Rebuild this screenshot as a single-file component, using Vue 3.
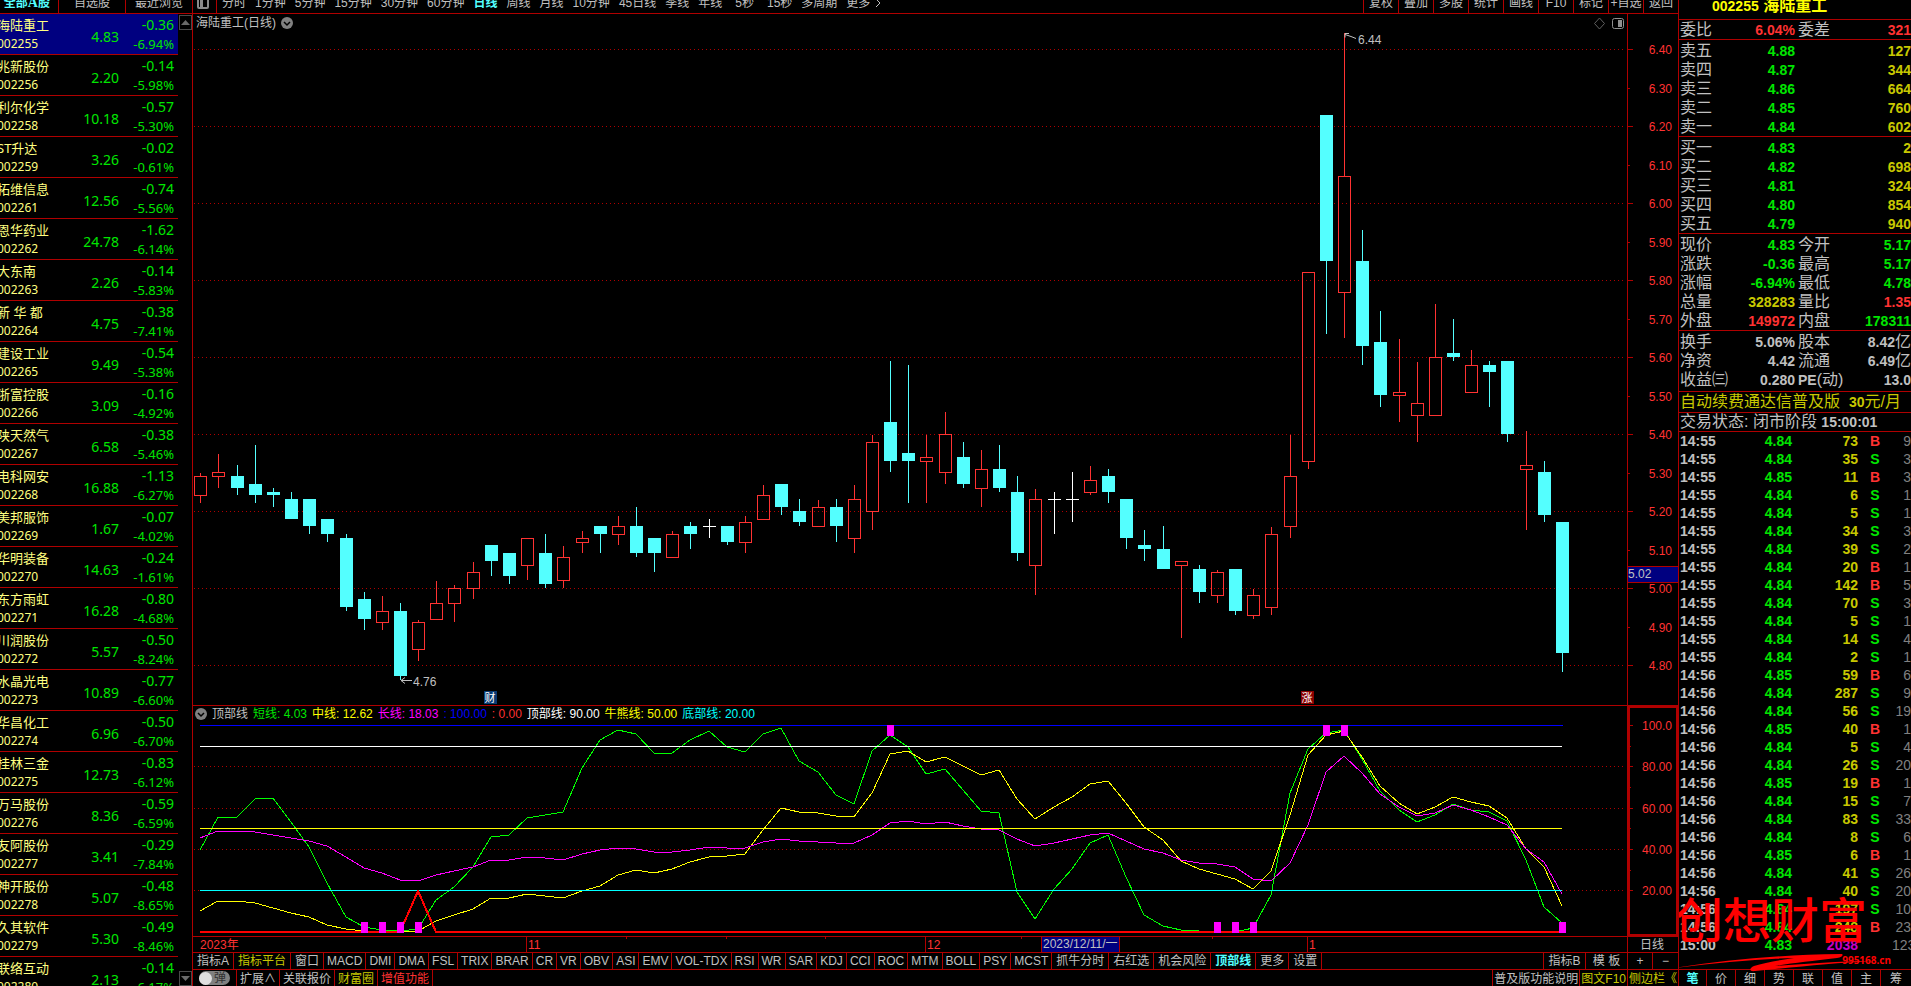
<script setup>
const stocks = [
  ['海陆重工', '002255', '4.83', '-0.36', '-6.94%'],
  ['兆新股份', '002256', '2.20', '-0.14', '-5.98%'],
  ['利尔化学', '002258', '10.18', '-0.57', '-5.30%'],
  ['ST升达', '002259', '3.26', '-0.02', '-0.61%'],
  ['拓维信息', '002261', '12.56', '-0.74', '-5.56%'],
  ['恩华药业', '002262', '24.78', '-1.62', '-6.14%'],
  ['大东南', '002263', '2.26', '-0.14', '-5.83%'],
  ['新 华 都', '002264', '4.75', '-0.38', '-7.41%'],
  ['建设工业', '002265', '9.49', '-0.54', '-5.38%'],
  ['浙富控股', '002266', '3.09', '-0.16', '-4.92%'],
  ['陕天然气', '002267', '6.58', '-0.38', '-5.46%'],
  ['电科网安', '002268', '16.88', '-1.13', '-6.27%'],
  ['美邦服饰', '002269', '1.67', '-0.07', '-4.02%'],
  ['华明装备', '002270', '14.63', '-0.24', '-1.61%'],
  ['东方雨虹', '002271', '16.28', '-0.80', '-4.68%'],
  ['川润股份', '002272', '5.57', '-0.50', '-8.24%'],
  ['水晶光电', '002273', '10.89', '-0.77', '-6.60%'],
  ['华昌化工', '002274', '6.96', '-0.50', '-6.70%'],
  ['桂林三金', '002275', '12.73', '-0.83', '-6.12%'],
  ['万马股份', '002276', '8.36', '-0.59', '-6.59%'],
  ['友阿股份', '002277', '3.41', '-0.29', '-7.84%'],
  ['神开股份', '002278', '5.07', '-0.48', '-8.65%'],
  ['久其软件', '002279', '5.30', '-0.49', '-8.46%'],
  ['联络互动', '002280', '2.13', '-0.14', '-6.17%'],
]

const periods = ['分时', '1分钟', '5分钟', '15分钟', '30分钟', '60分钟', '日线', '周线', '月线', '10分钟', '45日线', '季线', '年线', '5秒', '15秒', '多周期', '更多']
const tools = ['复权', '叠加', '多股', '统计', '画线', 'F10', '标记', '+自选', '返回']
const indicators = ['指标A', '指标平台', '窗口', 'MACD', 'DMI', 'DMA', 'FSL', 'TRIX', 'BRAR', 'CR', 'VR', 'OBV', 'ASI', 'EMV', 'VOL-TDX', 'RSI', 'WR', 'SAR', 'KDJ', 'CCI', 'ROC', 'MTM', 'BOLL', 'PSY', 'MCST', '抓牛分时', '右红选', '机会风险', '顶部线', '更多', '设置']
const isChinese = (t) => /[\u4e00-\u9fff]/.test(t)

const legend = [
  ['顶部线', 'grey'], ['短线: 4.03', 'green'], ['中线: 12.62', 'yellow'], ['长线: 18.03', 'magenta'],
  [': 100.00', 'blue'], [': 0.00', 'red'], ['顶部线: 90.00', 'white'], ['牛熊线: 50.00', 'yellow'], ['底部线: 20.00', 'cyan'],
]

/* kind, high, body top, body bottom, low (chart units) */
const candleData = [
  ['r', 473, 476, 496, 503], ['r', 454, 472, 477, 488], ['c', 465, 476, 488, 495], ['c', 445, 484, 495, 503],
  ['c', 488, 492, 495, 507], ['c', 492, 499, 519, 519], ['c', 499, 499, 526, 534], ['c', 519, 519, 534, 542],
  ['c', 534, 538, 607, 611], ['c', 592, 599, 619, 630], ['r', 596, 611, 623, 630], ['c', 603, 611, 676, 680],
  ['r', 620, 622, 650, 661], ['r', 581, 603, 620, 620], ['r', 585, 588, 604, 622], ['r', 562, 572, 589, 599],
  ['c', 545, 545, 561, 576], ['c', 553, 553, 576, 584], ['r', 538, 538, 566, 580], ['c', 534, 553, 584, 588],
  ['r', 546, 557, 581, 588], ['r', 531, 538, 543, 553], ['c', 526, 526, 534, 553], ['r', 516, 526, 535, 545],
  ['c', 507, 526, 553, 557], ['c', 538, 538, 553, 572], ['r', 531, 534, 558, 558], ['c', 522, 526, 534, 549],
  ['w', 519, 526, 527, 538], ['c', 526, 526, 542, 545], ['r', 516, 522, 543, 553], ['r', 485, 495, 520, 520],
  ['c', 484, 484, 507, 515], ['c', 499, 511, 522, 526], ['r', 500, 507, 527, 527], ['c', 499, 507, 526, 542],
  ['r', 485, 499, 539, 553], ['r', 435, 442, 512, 530], ['c', 361, 422, 461, 472], ['c', 365, 453, 461, 503],
  ['r', 435, 457, 462, 503], ['r', 412, 434, 473, 484], ['c', 442, 457, 484, 488], ['r', 450, 469, 489, 507],
  ['c', 445, 469, 488, 492], ['c', 476, 492, 553, 561], ['r', 489, 499, 566, 595], ['w', 492, 499, 500, 534],
  ['w', 472, 499, 500, 522], ['r', 466, 480, 493, 495], ['c', 469, 476, 492, 503], ['c', 499, 499, 538, 549],
  ['c', 530, 545, 549, 561], ['c', 526, 549, 569, 569], ['r', 561, 561, 566, 638], ['c', 565, 569, 592, 603],
  ['r', 570, 572, 596, 603], ['c', 569, 569, 611, 615], ['r', 589, 595, 616, 619], ['r', 527, 534, 608, 615],
  ['r', 435, 476, 527, 538], ['r', 272, 272, 462, 469], ['c', 115, 115, 261, 334], ['r', 33, 176, 293, 338],
  ['c', 230, 261, 346, 365], ['c', 311, 342, 395, 407], ['r', 339, 392, 396, 422], ['r', 362, 403, 416, 442],
  ['r', 304, 357, 416, 416], ['c', 319, 353, 357, 361], ['r', 350, 365, 393, 393], ['c', 361, 365, 372, 407],
  ['c', 361, 361, 434, 442], ['r', 431, 465, 470, 530], ['c', 461, 472, 515, 522], ['c', 522, 522, 653, 672],
]
const xAt = (i) => Math.round(200.253 + i * 18.156)
const candles = candleData.map(([kind, high, top, bottom, low], i) => ({ kind, high, top, bottom, low, x: xAt(i) }))

const priceTicks = Array.from({ length: 17 }, (_, i) => ({
  label: (6.4 - i * 0.1).toFixed(2),
  y: 49 + Math.round(i * 38.5),
  major: i % 2 === 0,
}))
const levelTicks = Array.from({ length: 9 }, (_, i) => ({
  label: i === 0 ? '100.0' : (100 - i * 10).toFixed(2),
  y: 725 + Math.round(i * 20.65),
  major: i % 2 === 0,
}))

const shortLine = [850, 817, 817, 799, 798, 822, 847, 883, 917, 927, 930, 931, 929, 900, 887, 867, 837, 835, 818, 815, 812, 768, 740, 730, 734, 753, 753, 740, 731, 747, 752, 734, 728, 761, 772, 795, 804, 751, 735, 747, 774, 769, 790, 811, 813, 892, 919, 889, 869, 843, 835, 877, 915, 926, 930, 931, 932, 932, 928, 895, 793, 749, 733, 730, 759, 791, 810, 822, 815, 804, 810, 812, 821, 860, 907, 923]
const midLine = [911, 901, 901, 903, 908, 913, 917, 925, 929, 931, 932, 932, 931, 921, 915, 909, 898, 898, 894, 896, 898, 891, 886, 875, 870, 873, 869, 862, 857, 856, 854, 830, 808, 812, 813, 816, 817, 793, 754, 751, 762, 757, 766, 775, 770, 799, 819, 807, 797, 784, 781, 803, 827, 840, 861, 869, 874, 879, 889, 871, 815, 755, 735, 731, 757, 786, 803, 814, 807, 797, 802, 806, 818, 849, 867, 906]
const longLine = [838, 831, 831, 832, 835, 838, 841, 846, 857, 868, 873, 880, 881, 875, 871, 867, 860, 860, 857, 858, 860, 854, 850, 848, 849, 852, 852, 850, 847, 848, 848, 842, 839, 841, 842, 843, 843, 835, 823, 821, 824, 822, 826, 829, 830, 839, 846, 843, 839, 835, 833, 841, 849, 853, 860, 863, 864, 867, 879, 881, 863, 825, 772, 756, 773, 794, 807, 816, 813, 805, 810, 817, 825, 849, 862, 894]
const points = (series) => series.map((y, i) => `${xAt(i)},${y}`).join(' ')
const marks = [...[38, 62, 63].map((i) => [xAt(i), 725]), ...[9, 10, 11, 12, 56, 57, 58, 75].map((i) => [xAt(i), 922])]

const months = [[526, '11'], [925, '12'], [1307, '1']]
const weekTicks = [626, 726, 825, 1021, 1212]

const asks = [['卖五', '4.88', '127'], ['卖四', '4.87', '344'], ['卖三', '4.86', '664'], ['卖二', '4.85', '760'], ['卖一', '4.84', '602']]
const bids = [['买一', '4.83', '2'], ['买二', '4.82', '698'], ['买三', '4.81', '324'], ['买四', '4.80', '854'], ['买五', '4.79', '940']]
const book = (rows) => rows.map(([a, p, v]) => [a, p, 'green', '', v, 'olive'])
const sections = [
  [['委比', '6.04%', 'red', '委差', '321', 'red']],
  book(asks),
  book(bids),
  [
    ['现价', '4.83', 'green', '今开', '5.17', 'green'],
    ['涨跌', '-0.36', 'green', '最高', '5.17', 'green'],
    ['涨幅', '-6.94%', 'green', '最低', '4.78', 'green'],
    ['总量', '328283', 'olive', '量比', '1.35', 'red'],
    ['外盘', '149972', 'red', '内盘', '178311', 'green'],
  ],
  [
    ['换手', '5.06%', 'grey', '股本', '8.42', 'grey', '亿'],
    ['净资', '4.42', 'grey', '流通', '6.49', 'grey', '亿'],
    ['收益㈢', '0.280', 'grey', 'PE(动)', '13.0', 'grey'],
  ],
]

const trades = [
  ['14:55', '4.84', 73, 'B', 9], ['14:55', '4.84', 35, 'S', 3], ['14:55', '4.85', 11, 'B', 3], ['14:55', '4.84', 6, 'S', 1],
  ['14:55', '4.84', 5, 'S', 1], ['14:55', '4.84', 34, 'S', 3], ['14:55', '4.84', 39, 'S', 2], ['14:55', '4.84', 20, 'B', 1],
  ['14:55', '4.84', 142, 'B', 5], ['14:55', '4.84', 70, 'S', 3], ['14:55', '4.84', 5, 'S', 1], ['14:55', '4.84', 14, 'S', 4],
  ['14:55', '4.84', 2, 'S', 1], ['14:56', '4.85', 59, 'B', 6], ['14:56', '4.84', 287, 'S', 9], ['14:56', '4.84', 56, 'S', 19],
  ['14:56', '4.85', 40, 'B', 1], ['14:56', '4.84', 5, 'S', 4], ['14:56', '4.84', 26, 'S', 20], ['14:56', '4.85', 19, 'B', 1],
  ['14:56', '4.84', 15, 'S', 7], ['14:56', '4.84', 83, 'S', 33], ['14:56', '4.84', 8, 'S', 6], ['14:56', '4.85', 6, 'B', 1],
  ['14:56', '4.84', 41, 'S', 26], ['14:56', '4.84', 40, 'S', 20], ['14:56', '4.84', 197, 'S', 10], ['14:56', '4.84', 248, 'B', 23],
  ['15:00', '4.83', 2038, '', 123],
]
const sideTabs = ['笔', '价', '细', '势', '联', '值', '主', '筹']
</script>

<template>
  <div class="app">
    <aside class="watch">
      <nav class="topbar watch-tabs">
        <button class="on">全部<b class="serif">A</b>股</button>
        <button>自选股</button>
        <button>最近浏览</button>
      </nav>
      <div class="watch-body">
        <table class="stocks">
          <tbody>
            <tr v-for="(s, i) in stocks" :key="s[1]" :class="{ current: i === 0 }">
              <td class="who"><span class="name">{{ s[0] }}</span><span class="code">{{ s[1] }}</span></td>
              <td class="price">{{ s[2] }}</td>
              <td class="delta"><span class="chg">{{ s[3] }}</span><span class="pct">{{ s[4] }}</span></td>
            </tr>
          </tbody>
        </table>
        <div class="scroll">
          <button aria-label="向上滚动"><svg width="9" height="5" viewBox="0 0 9 5"><path d="M4.500 0 9 5H0z" fill="#6a6a6a" /></svg></button>
          <button aria-label="向下滚动"><svg width="9" height="5" viewBox="0 0 9 5"><path d="M0 0h9L4.500 5z" fill="#6a6a6a" /></svg></button>
        </div>
      </div>
    </aside>

    <main class="center">
      <nav class="topbar">
        <button class="layout-btn" aria-label="布局">
          <svg width="12" height="12" viewBox="0 0 12 12"><rect x="1" y="1" width="10" height="10" rx="1" fill="none" stroke="#8a8a8a" stroke-width="2" /><rect x="3" y="1" width="3" height="9" fill="#8a8a8a" /></svg>
        </button>
        <div class="periods">
          <button v-for="p in periods" :key="p" :class="{ on: p === '日线', sec: p.endsWith('秒') }">{{ p }}</button>
          <svg class="chev" width="7" height="10" viewBox="0 0 7 10"><path d="M1 1l4 4-4 4" fill="none" stroke="#c0c0c0" /></svg>
        </div>
        <div class="tools">
          <button v-for="t in tools" :key="t">{{ t }}</button>
        </div>
      </nav>

      <section class="pane">
        <div class="caption">
          <span>海陆重工(日线)</span>
          <svg width="12" height="12" viewBox="0 0 12 12"><circle cx="6" cy="6" r="6" fill="#808080" /><path d="M3 5l3 3 3-3" fill="none" stroke="#000" stroke-width="1.500" /></svg>
        </div>
        <svg class="plot" viewBox="193 14 1485 691">
          <g class="grid">
            <template v-for="t in priceTicks" :key="t.label">
              <line v-if="t.major" x1="194" x2="1624" :y1="t.y + 0.5" :y2="t.y + 0.5" />
            </template>
          </g>
          <g class="frame">
            <line x1="1627.500" x2="1627.500" y1="14" y2="705" />
            <line v-for="t in priceTicks" :key="t.label" x1="1628" :x2="t.major ? 1633 : 1630" :y1="t.y + 0.5" :y2="t.y + 0.5" />
          </g>
          <g class="axis-text">
            <text v-for="t in priceTicks" :key="t.label" x="1672" :y="t.y + 5">{{ t.label }}</text>
          </g>
          <g shape-rendering="crispEdges">
            <g v-for="(c, i) in candles" :key="i" :class="['candle', c.kind]">
              <rect class="wick" :x="c.x" :y="c.high" width="1" :height="c.top - c.high" />
              <rect class="wick" :x="c.x" :y="c.bottom" width="1" :height="c.low - c.bottom" />
              <rect v-if="c.kind === 'r'" class="hollow" :x="c.x - 5.5" :y="c.top + 0.5" width="12" :height="c.bottom - c.top - 1" />
              <rect v-else class="wick" :x="c.x - 6" :y="c.top" width="13" :height="c.bottom - c.top" />
            </g>
          </g>
          <g fill="none" stroke="#c0c0c0">
            <path d="M401 680.500h11M405 677.500l-4 3 4 3" />
            <path d="M1345 34.500l6 2 5 2M1349 33.500h-4v4" />
          </g>
          <text class="note" x="413" y="686">4.76</text>
          <text class="note" x="1358" y="44">6.44</text>
          <rect x="484" y="691" width="13" height="13" fill="#0a3a72" />
          <text class="flag" x="490" y="702">财</text>
          <rect x="1301" y="691" width="13" height="13" fill="#8a0000" />
          <text class="flag" x="1307" y="702">涨</text>
          <rect x="1628" y="566" width="50" height="17" fill="#b00000" />
          <rect x="1628" y="567" width="50" height="15" fill="#000080" />
          <text class="note" x="1628" y="578">5.02</text>
          <path d="M1599.500 18l5 5.500-5 5.500-5-5.500z" fill="none" stroke="#606060" />
          <rect x="1612.500" y="18.500" width="11" height="10" rx="2" fill="none" stroke="#909090" />
          <rect x="1618" y="20" width="4" height="7" fill="#909090" />
        </svg>
      </section>

      <section class="pane">
        <div class="caption legend">
          <svg width="12" height="12" viewBox="0 0 12 12"><circle cx="6" cy="6" r="6" fill="#808080" /><path d="M3 5l3 3 3-3" fill="none" stroke="#000" stroke-width="1.500" /></svg>
          <span v-for="l in legend" :key="l[0]" :class="'t-' + l[1]">{{ l[0] }}</span>
        </div>
        <svg class="plot" viewBox="193 706 1485 230">
          <g class="grid">
            <line v-for="y in [766, 808, 849, 890]" :key="y" x1="194" x2="1624" :y1="y + 0.5" :y2="y + 0.5" />
          </g>
          <g class="frame">
            <line x1="1627.500" x2="1627.500" y1="706" y2="936" />
            <line v-for="t in levelTicks" :key="t.label" x1="1629" :x2="t.major ? 1633 : 1631" :y1="t.y + 0.5" :y2="t.y + 0.5" />
            <rect x="1629" y="707" width="48" height="228" fill="none" stroke-width="2" />
          </g>
          <g class="axis-text">
            <template v-for="t in levelTicks" :key="t.label">
              <text v-if="t.major" x="1672" :y="t.y + 5">{{ t.label }}</text>
            </template>
          </g>
          <g class="lines">
            <polyline :points="points(shortLine)" stroke="#00ff00" />
            <polyline :points="points(midLine)" stroke="#ffff00" />
            <polyline :points="points(longLine)" stroke="#ff00ff" />
            <path d="M200 725.500H1563" stroke="#0000ff" />
            <path d="M200 746.500H1562" stroke="#ffffff" />
            <path d="M200 828.500H1562" stroke="#ffff00" />
            <path d="M200 890.500H1562" stroke="#00ffff" />
            <path d="M200 932H400L418 891L436 932H1562" stroke="#ff0000" stroke-width="2" />
          </g>
          <rect v-for="(m, i) in marks" :key="i" :x="m[0] - 3" :y="m[1]" width="7" height="11" fill="#ff00ff" />
        </svg>
      </section>

      <section class="pane">
        <svg class="plot" viewBox="193 937 1485 15">
          <g class="frame">
            <line v-for="m in months" :key="m[0]" :x1="m[0] + 0.5" :x2="m[0] + 0.5" y1="937" y2="952" />
            <line v-for="x in weekTicks" :key="x" :x1="x + 0.5" :x2="x + 0.5" y1="937" y2="939" />
            <line x1="1627.500" x2="1627.500" y1="937" y2="952" />
          </g>
          <text class="date" x="200" y="949">2023年</text>
          <text v-for="m in months" :key="m[0]" class="date" :x="m[0] + 2" y="949">{{ m[1] }}</text>
          <rect x="1041" y="937" width="79" height="15" fill="#b00000" />
          <rect x="1042" y="937" width="77" height="15" fill="#000080" />
          <text class="note" x="1043" y="948">2023/12/11/一</text>
          <text class="note" x="1640" y="949">日线</text>
        </svg>
      </section>

      <nav class="strip indicators">
        <button v-for="t in indicators" :key="t" :class="{ han: isChinese(t), gold: t === '指标平台', on: t === '顶部线' }">{{ t }}</button>
        <div class="push">
          <button class="wide">指标B</button>
          <button class="wide">模 板</button>
          <button class="zoom">+</button>
          <button class="zoom">−</button>
        </div>
      </nav>

      <nav class="strip bottom">
        <label class="switch"><input type="checkbox" aria-label="弹"><span class="knob"></span>弹</label>
        <button>扩展∧</button>
        <button>关联报价</button>
        <button class="gold">财富圈</button>
        <button class="hot">增值功能</button>
        <div class="push">
          <button>普及版功能说明</button>
          <button class="gold">图文F10</button>
          <button class="gold">侧边栏《</button>
        </div>
      </nav>
    </main>

    <aside class="quote">
      <h1><span>002255</span> 海陆重工</h1>
      <table v-for="(rows, i) in sections" :key="i" :class="['facts', 'part' + i]">
        <tbody>
          <tr v-for="r in rows" :key="r[0]">
            <th class="first">{{ r[0] }}</th>
            <td :class="['mid', 't-' + r[2]]">{{ r[1] }}</td>
            <th class="second"><template v-if="r[3] === 'PE(动)'"><b>PE</b>(动)</template><template v-else>{{ r[3] }}</template></th>
            <td :class="'t-' + r[5]">{{ r[4] }}<span v-if="r[6]" class="unit">{{ r[6] }}</span></td>
          </tr>
        </tbody>
      </table>
      <a class="promo" href="#">自动续费通达信普及版&nbsp; <b>30</b>元/月</a>
      <p class="status">交易状态: 闭市阶段 <b>15:00:01</b></p>
      <table class="trades">
        <tbody>
          <tr v-for="(t, i) in trades" :key="i">
            <td class="time">{{ t[0] }}</td>
            <td class="at t-green">{{ t[1] }}</td>
            <td :class="['vol', t[3] ? 't-olive' : 't-violet']">{{ t[2] }}</td>
            <td :class="['side', t[3] === 'B' ? 't-red' : 't-green']">{{ t[3] }}</td>
            <td class="count">{{ t[4] }}</td>
          </tr>
        </tbody>
      </table>
      <nav class="side-tabs">
        <button v-for="t in sideTabs" :key="t" :class="{ on: t === '笔' }">{{ t }}</button>
      </nav>
      <div class="stamp">
        <strong>创想财富</strong>
        <svg width="204" height="30" viewBox="0 -8 204 30"><path d="M0 18C50 10 100 5 166 4c3 0 2 3-4 4-25 3-45 5-62 8 30-2 62-5 98-5-40 2-75 6-118 10-6 1-6-3-1-5 10-3 26-6 40-8C80 9 40 13 0 18z" fill="#ff0000" /></svg>
        <span>995168.cn</span>
      </div>
    </aside>
  </div>
</template>

<style>
body {
  background: #000;
}
</style>

<style scoped>
.app {
  --line: #b00000;
  display: grid;
  grid-template-columns: 193px minmax(0, 1fr) 233px;
  height: 100vh;
  overflow: hidden;
  background: #000;
  color: #c0c0c0;
  font: 12px/16px "Liberation Sans", "Noto Sans CJK SC", sans-serif;
  white-space: nowrap;
}
.app * {
  box-sizing: border-box;
}
button {
  margin: 0;
  padding: 0;
  border: 0;
  background: none;
  color: inherit;
  font: inherit;
  white-space: nowrap;
  cursor: pointer;
}
table {
  border-spacing: 0;
  border-collapse: separate;
}
td,
th {
  padding: 0;
}
.on {
  color: #54ffff;
  font-weight: bold;
}
.gold {
  color: #c8c800;
}
.hot {
  color: #ff3232;
}
.topbar {
  display: flex;
  align-items: stretch;
  height: 22px;
  margin-top: -8px;
  border-bottom: 1px solid var(--line);
  flex: none;
}

.watch {
  border-right: 1px solid var(--line);
  overflow: hidden;
}
.watch-tabs button {
  flex: 0 0 67px;
  border-right: 1px solid var(--line);
}
.watch-tabs button:first-child {
  flex-basis: 59px;
  padding-right: 8px;
  text-align: right;
}
.watch-tabs button:last-child {
  flex: 1;
  border-right: 0;
}
.serif {
  font-family: "Liberation Serif", serif;
  font-size: 14px;
}
.watch-body {
  display: flex;
  height: calc(100vh - 14px);
}
.stocks {
  flex: none;
  width: 178px;
  table-layout: fixed;
}
.stocks td {
  height: 41px;
  border-bottom: 1px solid var(--line);
  font-family: "Noto Sans", "Noto Sans CJK SC", sans-serif;
  color: #00e600;
  text-align: right;
}
.current td {
  background: #000080;
}
.stocks .who {
  width: 52px;
  color: #ffff80;
  text-align: left;
}
.who span {
  display: block;
  margin-left: -3px;
}
.name,
.pct {
  font-size: 13px;
}
.name,
.chg {
  line-height: 20px;
}
.code,
.pct {
  line-height: 18px;
}
.code {
  font-size: 12px;
}
.price {
  width: 67px;
  padding-top: 6px;
  font-size: 14px;
}
.delta span {
  display: block;
  margin-right: 4px;
}
.chg {
  font-size: 14px;
}
.scroll {
  flex: 1;
  display: flex;
  flex-direction: column;
  justify-content: space-between;
  padding: 1px 0 0 1px;
}
.scroll button {
  display: grid;
  place-items: center;
  height: 15px;
  border: 1px solid #4a4a4a;
}

.center {
  display: flex;
  flex-direction: column;
  min-width: 0;
}
.layout-btn {
  width: 24px;
  padding: 4px 0 0 4px;
  border-right: 1px solid var(--line);
  text-align: left;
}
.periods {
  display: flex;
  align-items: center;
  gap: 9px;
  margin-left: 5px;
}
.sec {
  padding-left: 4px;
}
.chev {
  margin-left: -4px;
}
.tools {
  display: flex;
  margin-left: auto;
}
.tools button {
  width: 35px;
  border-left: 1px solid var(--line);
}
.pane {
  position: relative;
  flex: none;
  border-bottom: 1px solid var(--line);
}
.plot {
  display: block;
  width: 100%;
  font: 12px "Liberation Sans", "Noto Sans CJK SC", sans-serif;
}
.caption {
  position: absolute;
  top: 1px;
  left: 3px;
  display: flex;
  align-items: center;
  gap: 5px;
}
.legend {
  top: 0;
  left: 2px;
}
.grid line {
  stroke: #b00000;
  stroke-dasharray: 1 3;
  shape-rendering: crispEdges;
}
.frame {
  stroke: #b00000;
  shape-rendering: crispEdges;
}
.axis-text {
  fill: #ff3232;
  text-anchor: end;
}
.date {
  fill: #ff3232;
}
.note {
  fill: #c0c0c0;
}
.flag {
  fill: #fff;
  font-size: 11px;
  text-anchor: middle;
}
.c .wick {
  fill: #54ffff;
}
.r .wick {
  fill: #ff3232;
}
.w .wick {
  fill: #fff;
}
.hollow {
  fill: none;
  stroke: #ff3232;
}
.lines {
  fill: none;
  shape-rendering: crispEdges;
}

.strip {
  display: flex;
  height: 17px;
  flex: none;
  border-bottom: 1px solid var(--line);
}
.strip button {
  padding: 0 3px;
  border-right: 1px solid var(--line);
}
.strip .han {
  padding: 0 4px;
}
.push {
  display: flex;
  margin-left: auto;
  border-left: 1px solid var(--line);
}
.strip .push button:last-child {
  border-right: 0;
}
.strip .wide {
  width: 42px;
}
.strip .zoom {
  width: 25px;
}
.bottom {
  height: 18px;
  border-bottom: 0;
}
.bottom .push button {
  padding: 0 1px;
}
.switch {
  position: relative;
  display: flex;
  align-items: center;
  justify-content: flex-end;
  width: 31px;
  height: 14px;
  margin: 1px 6px 0;
  padding-right: 4px;
  border-radius: 7px;
  background: #808080;
  color: #303030;
}
.switch + button {
  border-left: 1px solid var(--line);
}
.switch input {
  position: absolute;
  inset: 0;
  margin: 0;
  opacity: 0;
}
.knob {
  position: absolute;
  left: 0;
  top: 1px;
  width: 13px;
  height: 13px;
  border-radius: 50%;
  background: #e0e0e0;
}

.quote {
  position: relative;
  display: flex;
  flex-direction: column;
  min-width: 0;
  border-left: 1px solid var(--line);
  overflow: hidden;
  font-size: 16px;
}
.quote h1 {
  flex: none;
  height: 27px;
  margin: -7px 0 0;
  padding-left: 33px;
  border-bottom: 1px solid var(--line);
  color: #ffff00;
  font-size: 16px;
  line-height: 26px;
}
.quote h1 span {
  font-size: 14px;
}
.quote b {
  font-size: 14px;
}
.facts {
  flex: none;
  width: 100%;
  table-layout: fixed;
  padding-top: 1px;
  border-bottom: 1px solid var(--line);
}
.part0 {
  padding-top: 0;
}
.part4 {
  padding-bottom: 2px;
}
.facts th,
.facts td {
  height: 19px;
  line-height: 18px;
}
.facts th {
  font-weight: normal;
  text-align: left;
}
.facts th b {
  line-height: 16px;
}
.facts td {
  font-size: 14px;
  font-weight: bold;
  text-align: right;
}
.first {
  width: 34px;
  padding-left: 1px;
}
.facts .mid {
  width: 82px;
}
.second {
  width: 36px;
  padding-left: 3px;
}
.unit {
  font-size: 16px;
  font-weight: normal;
  line-height: 16px;
}
.promo,
.status {
  flex: none;
  height: 21px;
  margin: 0;
  padding-left: 1px;
  border-bottom: 1px solid var(--line);
  line-height: 20px;
}
.promo {
  color: #c8c800;
  text-decoration: none;
}
.status {
  height: 19px;
  line-height: 18px;
}
.trades {
  flex: none;
  width: 100%;
  table-layout: fixed;
  font-size: 14px;
  font-weight: bold;
  text-align: right;
}
.trades td {
  height: 18px;
  line-height: 18px;
}
.trades .time {
  width: 48px;
  padding-left: 1px;
  text-align: left;
}
.at {
  width: 65px;
}
.vol {
  width: 66px;
}
.trades .side {
  width: 34px;
  text-align: center;
}
.trades .count {
  color: #808080;
  font-weight: normal;
}
.side-tabs {
  display: flex;
  flex: none;
  height: 18px;
  margin-top: 15px;
  border-top: 1px solid var(--line);
  font-size: 12px;
}
.side-tabs button {
  width: 29px;
  border-right: 1px solid var(--line);
}
.side-tabs button:first-child {
  width: 28px;
}
.side-tabs button:last-child {
  width: 30px;
  border-right: 0;
}
.stamp {
  position: absolute;
  left: -4px;
  bottom: 16px;
  color: #ff0000;
}
.stamp strong {
  display: block;
  font: 500 48px/50px "Noto Sans CJK SC", sans-serif;
}
.stamp svg {
  display: block;
}
.stamp span {
  position: absolute;
  right: -12px;
  bottom: 6px;
  font: bold 10px/12px "Noto Sans", sans-serif;
}

.t-grey {
  color: #c0c0c0;
}
.t-green {
  color: #00e600;
}
.t-yellow {
  color: #ffff00;
}
.t-olive {
  color: #c8c800;
}
.t-magenta {
  color: #ff00ff;
}
.t-violet {
  color: #c800c8;
}
.t-blue {
  color: #0000ff;
}
.t-red {
  color: #ff3232;
}
.t-white {
  color: #fff;
}
.t-cyan {
  color: #00ffff;
}
</style>
